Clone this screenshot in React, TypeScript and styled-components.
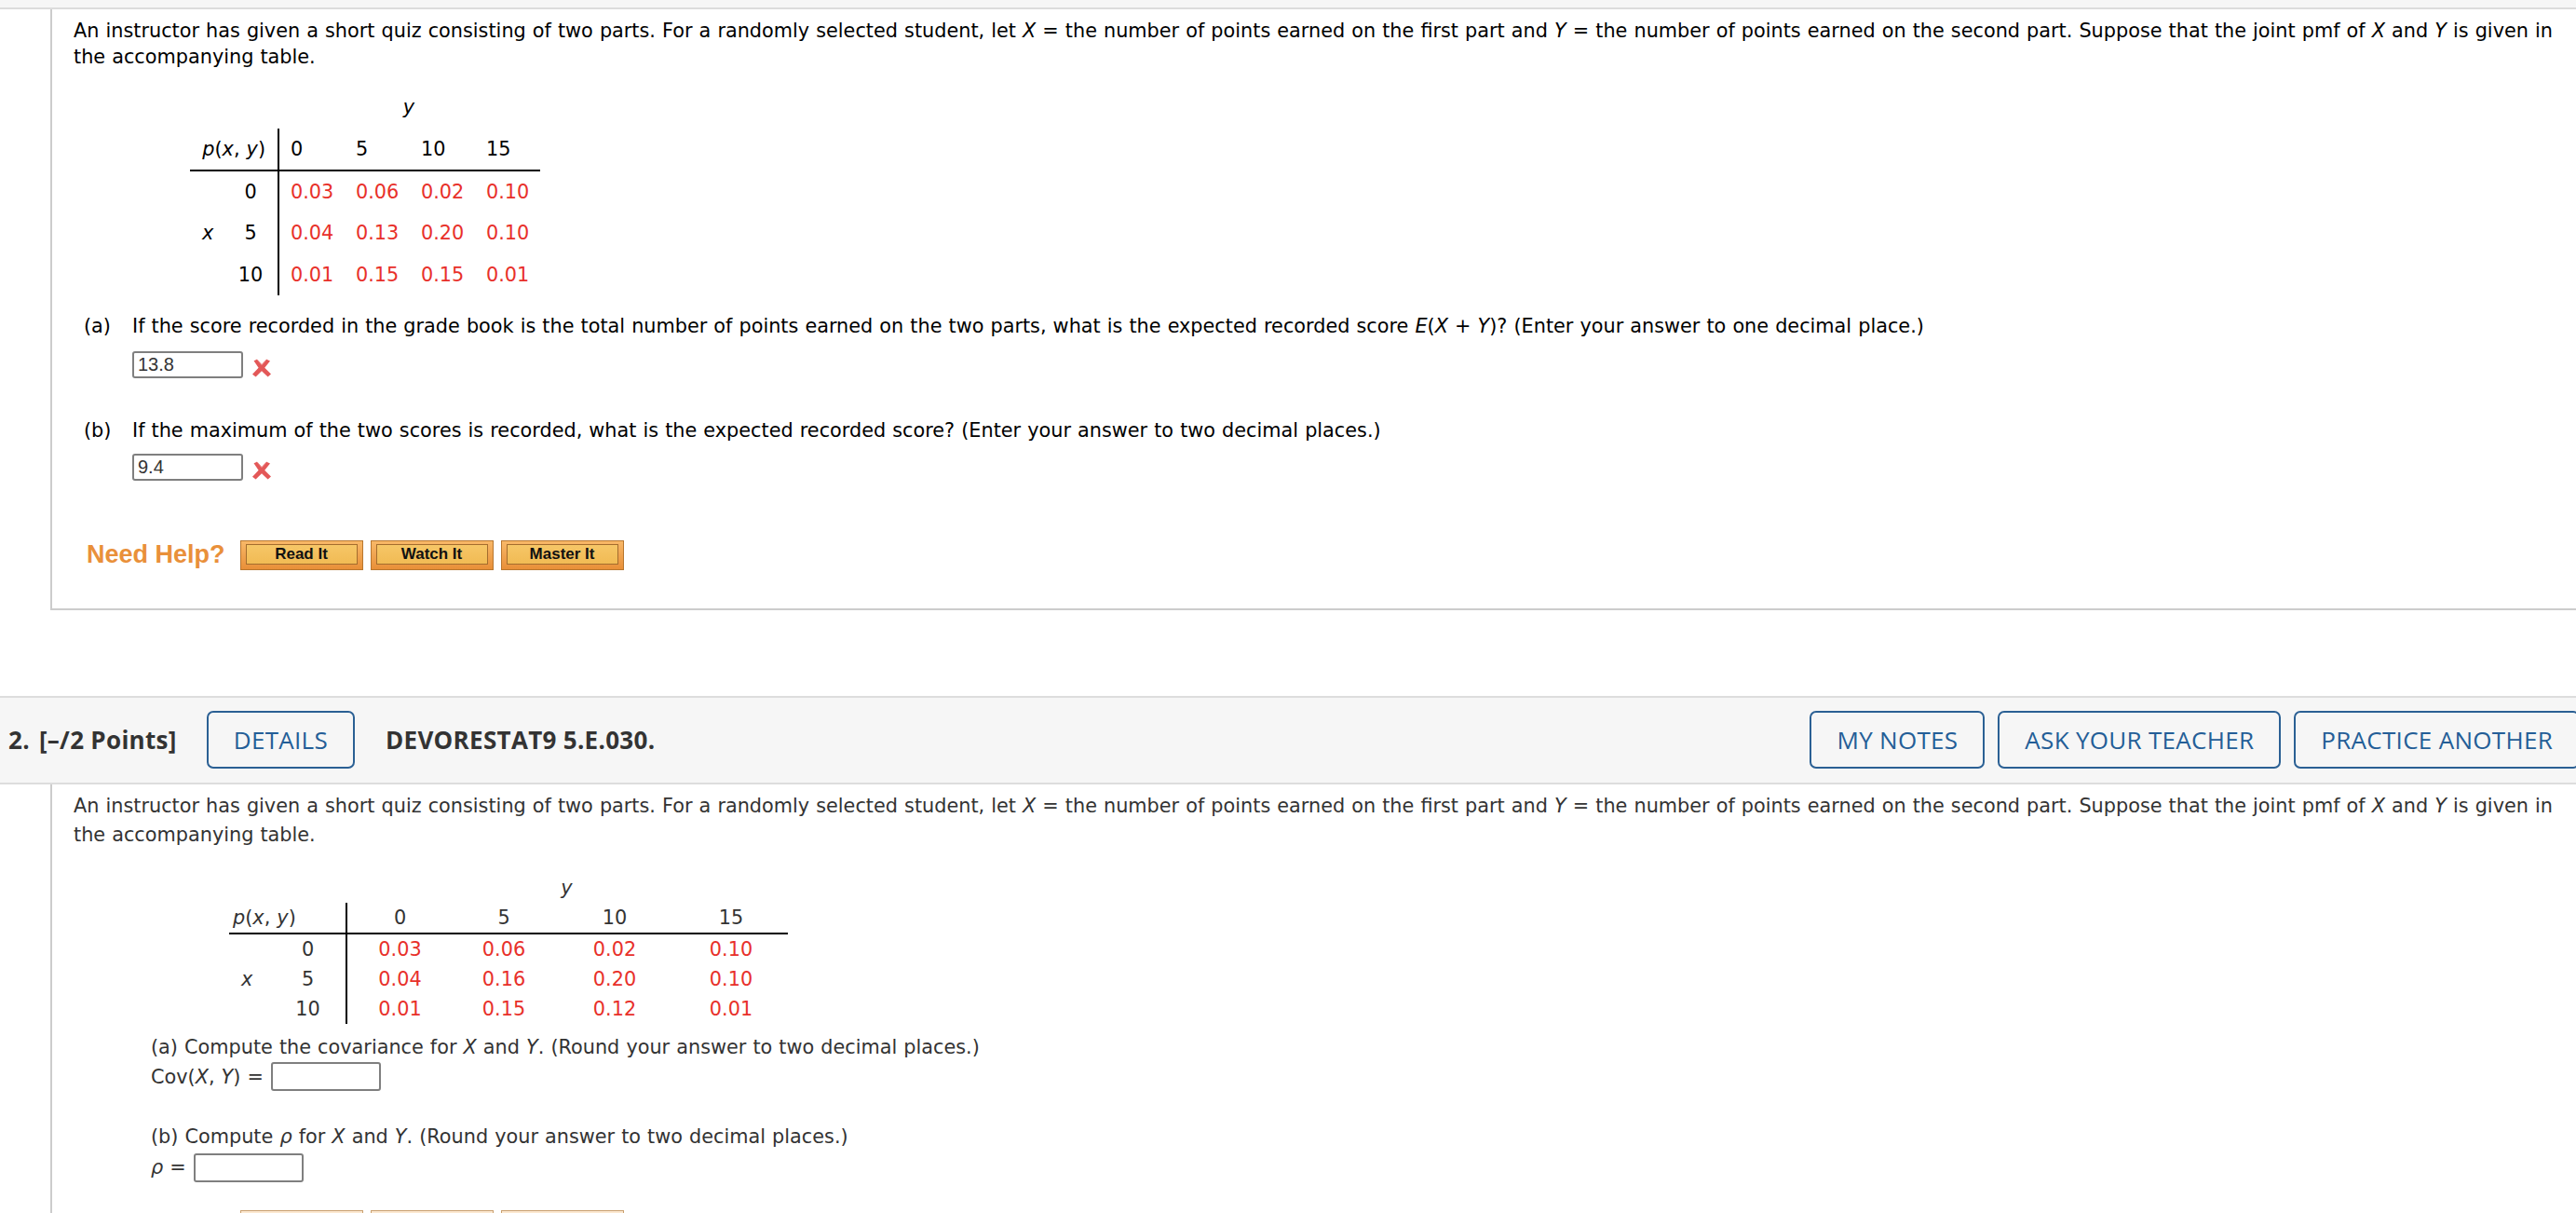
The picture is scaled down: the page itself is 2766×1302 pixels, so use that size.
import React from 'react';
import styled, { createGlobalStyle } from 'styled-components';

const GlobalStyle = createGlobalStyle`
    html, body {
        margin: 0;
        padding: 0;
        background: #ffffff;
        overflow-x: hidden;
    }
    body {
        font-family: "DejaVu Sans", Verdana, sans-serif;
        font-size: 20.8px;
        color: #000000;
    }
`;

const Page = styled.div`
    width: 2766px;
    overflow: hidden;
`;

const HeaderStub = styled.div`
    height: 8px;
    background: #f6f6f6;
    border-bottom: 2px solid #dcdcdc;
`;

const Panel = styled.div<{ $muted?: boolean; $closed?: boolean }>`
    margin-left: 54px;
    border-left: 2px solid #cccccc;
    border-bottom: ${(p) => (p.$closed ? '2px solid #cccccc' : 'none')};
    padding: ${(p) => (p.$muted ? '8px 6px 40px 23px' : '10px 6px 41px 23px')};
    color: ${(p) => (p.$muted ? '#333333' : '#000000')};
    word-spacing: 0.45px;
`;

const Paragraph = styled.p<{ $lh: number }>`
    margin: 0;
    line-height: ${(p) => p.$lh}px;
`;

const Em = styled.i`
    font-style: italic;
`;

const Grid = styled.div<{ $cols: string; $left: number; $top: number }>`
    display: grid;
    grid-template-columns: ${(p) => p.$cols};
    margin-left: ${(p) => p.$left}px;
    margin-top: ${(p) => p.$top}px;
    width: max-content;
`;

const Cell = styled.div<{
    $h: number;
    $align?: 'left' | 'center' | 'right';
    $span?: number;
    $red?: boolean;
    $rule?: boolean;
    $bar?: boolean;
    $pad?: string;
}>`
    box-sizing: border-box;
    height: ${(p) => p.$h + (p.$rule ? 2 : 0)}px;
    line-height: ${(p) => p.$h}px;
    grid-column: ${(p) => (p.$span ? `span ${p.$span}` : 'auto')};
    text-align: ${(p) => p.$align || 'left'};
    color: ${(p) => (p.$red ? '#e8302a' : 'inherit')};
    border-bottom: ${(p) => (p.$rule ? '2px solid #000' : 'none')};
    border-left: ${(p) => (p.$bar ? '2px solid #000' : 'none')};
    padding: ${(p) => p.$pad || '0'};
    white-space: nowrap;
`;

const PartRow = styled.div<{ $top: number; $lh: number; $indent: number }>`
    display: flex;
    margin-top: ${(p) => p.$top}px;
    margin-left: ${(p) => p.$indent}px;
    line-height: ${(p) => p.$lh}px;
    white-space: nowrap;
`;

const PartLabel = styled.span`
    width: 52px;
    flex: none;
`;

const AnswerRow = styled.div<{ $top: number; $indent: number }>`
    display: flex;
    align-items: center;
    gap: 8px;
    margin-top: ${(p) => p.$top}px;
    margin-left: ${(p) => p.$indent}px;
    white-space: nowrap;
`;

const AnswerBox = styled.input<{ $w: number; $h: number }>`
    box-sizing: border-box;
    width: ${(p) => p.$w}px;
    height: ${(p) => p.$h}px;
    margin: 0;
    padding: 0 4px;
    border: 2px solid #7f7f7f;
    border-radius: 3px;
    background: #ffffff;
    font-family: "Liberation Sans", Arial, sans-serif;
    font-size: 20px;
    color: #333333;
    outline: none;
`;

const WrongMark = styled.svg`
    flex: none;
    margin-left: 1px;
    margin-top: 7px;
`;

const HelpRow = styled.div<{ $top: number }>`
    display: flex;
    align-items: center;
    margin-top: ${(p) => p.$top}px;
    margin-left: 14px;
`;

const HelpTitle = styled.span`
    font-family: "Liberation Sans", Arial, sans-serif;
    font-weight: 700;
    font-size: 27px;
    color: #e9903a;
    margin-right: 16px;
    word-spacing: 0;
`;

const HelpButton = styled.div<{ $pale?: boolean }>`
    box-sizing: border-box;
    width: 132px;
    height: 32px;
    margin-right: 8px;
    padding: 3px 5px 5px;
    border: 1px solid ${(p) => (p.$pale ? '#c9a070' : '#b8772f')};
    background: ${(p) =>
        p.$pale ? 'linear-gradient(#fbe9d2, #f6dcb8)' : 'linear-gradient(#f8b868, #e88f38)'};
`;

const HelpFace = styled.span<{ $pale?: boolean }>`
    box-sizing: border-box;
    display: flex;
    align-items: center;
    justify-content: center;
    height: 100%;
    border: 1px solid ${(p) => (p.$pale ? '#d8b48a' : '#a46d2e')};
    background: ${(p) => (p.$pale ? '#fbebd3' : 'linear-gradient(#f6c667, #f1bb54)')};
    font-family: "Liberation Sans", Arial, sans-serif;
    font-weight: 700;
    font-size: 17px;
    color: #111111;
    word-spacing: 0;
`;

const QuestionBar = styled.div`
    display: flex;
    align-items: center;
    margin-top: 92px;
    margin-right: -4px;
    padding: 14px 0 15px 9px;
    background: #f6f6f6;
    border-top: 2px solid #dddddd;
    border-bottom: 2px solid #dddddd;
    font-family: "Open Sans", "DejaVu Sans", sans-serif;
    font-size: 26px;
    color: #333333;
`;

const QuestionNumber = styled.span`
    font-weight: 700;
    margin-right: 32px;
    letter-spacing: 0.3px;
    white-space: nowrap;
`;

const NumberDot = styled.span`
    margin-right: 10px;
`;

const Source = styled.span`
    font-weight: 700;
    margin-left: 33px;
    letter-spacing: 0.3px;
    white-space: nowrap;
`;

const BarSpacer = styled.div`
    flex: 1;
`;

const BarButton = styled.button`
    box-sizing: border-box;
    height: 62px;
    margin-left: 14px;
    padding: 0 27px;
    border: 2px solid #2b6094;
    border-radius: 7px;
    background: transparent;
    font-family: "Open Sans", "DejaVu Sans", sans-serif;
    font-size: 26px;
    font-weight: 500;
    letter-spacing: 0.3px;
    color: #245e97;
    white-space: nowrap;
    &:first-of-type {
        margin-left: 0;
    }
`;

const Cross = () => (
    <WrongMark width="22" height="20" viewBox="0 0 22 20">
        <path
            d="M2.5 2.2 L6 0.8 L11 6.6 L16.3 0.8 L20 2.6 L14.2 9.8 L21 16.6 L17.6 19.4 L11 13.2 L4.6 19.4 L1 16.8 L7.6 9.8 Z"
            fill="#e35858"
        />
        <path d="M6 0.8 L11 6.6 L16.3 0.8" stroke="#f08c8c" strokeWidth="1" fill="none" />
    </WrongMark>
);

const HelpButtons = ({ pale }: { pale?: boolean }) => (
    <>
        {['Read It', 'Watch It', 'Master It'].map((label) => (
            <HelpButton key={label} $pale={pale}>
                <HelpFace $pale={pale}>{label}</HelpFace>
            </HelpButton>
        ))}
    </>
);

const Intro = ({ lh }: { lh: number }) => (
    <Paragraph $lh={lh}>
        An instructor has given a short quiz consisting of two parts. For a randomly selected student, let <Em>X</Em> = the
        number of points earned on the first part and <Em>Y</Em> = the number of points earned on the second part. Suppose
        that the joint pmf of <Em>X</Em> and <Em>Y</Em> is given in the accompanying table.
    </Paragraph>
);

const PXY = () => (
    <>
        <Em>p</Em>(<Em>x</Em>, <Em>y</Em>)
    </>
);

const ys = ['0', '5', '10', '15'];

const firstTable = [
    ['0', ['0.03', '0.06', '0.02', '0.10']],
    ['5', ['0.04', '0.13', '0.20', '0.10']],
    ['10', ['0.01', '0.15', '0.15', '0.01']],
] as const;

const secondTable = [
    ['0', ['0.03', '0.06', '0.02', '0.10']],
    ['5', ['0.04', '0.16', '0.20', '0.10']],
    ['10', ['0.01', '0.15', '0.12', '0.01']],
] as const;

function FirstTable() {
    const h = 44.5;
    return (
        <Grid $cols="36px 58px 72px 70px 70px 70px" $left={125} $top={18}>
            <Cell $h={h} $span={2} />
            <Cell $h={h} $span={4} $align="center">
                <Em>y</Em>
            </Cell>
            <Cell $h={44} $span={2} $align="right" $rule $pad="0 13px 0 0">
                <PXY />
            </Cell>
            {ys.map((y, i) => (
                <Cell key={y} $h={44} $rule $bar={i === 0} $pad="0 0 0 12px">
                    {y}
                </Cell>
            ))}
            {firstTable.map(([x, values]) => (
                <React.Fragment key={x}>
                    <Cell $h={h} $pad="0 0 0 13px">
                        {x === '5' ? <Em>x</Em> : null}
                    </Cell>
                    <Cell $h={h} $align="center">
                        {x}
                    </Cell>
                    {values.map((v, i) => (
                        <Cell key={i} $h={h} $red $bar={i === 0} $pad="0 0 0 12px">
                            {v}
                        </Cell>
                    ))}
                </React.Fragment>
            ))}
        </Grid>
    );
}

function SecondTable() {
    const h = 32;
    return (
        <Grid $cols="44px 81px 115px 110px 128px 122px" $left={167} $top={24.6}>
            <Cell $h={h} $span={2} />
            <Cell $h={h} $span={4} $align="center">
                <Em>y</Em>
            </Cell>
            <Cell $h={h} $span={2} $rule $pad="0 0 0 4px">
                <PXY />
            </Cell>
            {ys.map((y, i) => (
                <Cell key={y} $h={h} $rule $bar={i === 0} $align="center">
                    {y}
                </Cell>
            ))}
            {secondTable.map(([x, values]) => (
                <React.Fragment key={x}>
                    <Cell $h={h} $pad="0 0 0 13px">
                        {x === '5' ? <Em>x</Em> : null}
                    </Cell>
                    <Cell $h={h} $align="center">
                        {x}
                    </Cell>
                    {values.map((v, i) => (
                        <Cell key={i} $h={h} $red $bar={i === 0} $align="center">
                            {v}
                        </Cell>
                    ))}
                </React.Fragment>
            ))}
        </Grid>
    );
}

export default function App() {
    return (
        <Page>
            <GlobalStyle />
            <HeaderStub />
            <Panel $closed>
                <Intro lh={27.7} />
                <FirstTable />
                <PartRow $top={19.5} $lh={27.7} $indent={11}>
                    <PartLabel>(a)</PartLabel>
                    <span>
                        If the score recorded in the grade book is the total number of points earned on the two parts,
                        what is the expected recorded score <Em>E</Em>(<Em>X</Em> + <Em>Y</Em>)? (Enter your answer to
                        one decimal place.)
                    </span>
                </PartRow>
                <AnswerRow $top={12} $indent={63}>
                    <AnswerBox $w={119} $h={29} readOnly value="13.8" />
                    <Cross />
                </AnswerRow>
                <PartRow $top={43} $lh={27.7} $indent={11}>
                    <PartLabel>(b)</PartLabel>
                    <span>
                        If the maximum of the two scores is recorded, what is the expected recorded score? (Enter your
                        answer to two decimal places.)
                    </span>
                </PartRow>
                <AnswerRow $top={10.5} $indent={63}>
                    <AnswerBox $w={119} $h={29} readOnly value="9.4" />
                    <Cross />
                </AnswerRow>
                <HelpRow $top={64}>
                    <HelpTitle>Need Help?</HelpTitle>
                    <HelpButtons />
                </HelpRow>
            </Panel>

            <QuestionBar>
                <QuestionNumber>
                    <NumberDot>2.</NumberDot>[–/2 Points]
                </QuestionNumber>
                <BarButton>DETAILS</BarButton>
                <Source>DEVORESTAT9 5.E.030.</Source>
                <BarSpacer />
                <BarButton>MY NOTES</BarButton>
                <BarButton>ASK YOUR TEACHER</BarButton>
                <BarButton>PRACTICE ANOTHER</BarButton>
            </QuestionBar>

            <Panel $muted>
                <Intro lh={31.2} />
                <SecondTable />
                <PartRow $top={10} $lh={31.2} $indent={83}>
                    (a) Compute the covariance for <Em>&nbsp;X</Em>&nbsp;and <Em>&nbsp;Y</Em>. (Round your answer to two
                    decimal places.)
                </PartRow>
                <AnswerRow $top={0} $indent={83}>
                    <span>
                        Cov(<Em>X</Em>, <Em>Y</Em>) =
                    </span>
                    <AnswerBox $w={118} $h={31} readOnly value="" />
                </AnswerRow>
                <PartRow $top={34} $lh={31.2} $indent={83}>
                    (b) Compute&nbsp;<Em>ρ</Em>&nbsp;for <Em>&nbsp;X</Em>&nbsp;and <Em>&nbsp;Y</Em>. (Round your answer to
                    two decimal places.)
                </PartRow>
                <AnswerRow $top={1.5} $indent={83}>
                    <span>
                        <Em>ρ</Em> =
                    </span>
                    <AnswerBox $w={118} $h={31} readOnly value="" />
                </AnswerRow>
                <HelpRow $top={30.6}>
                    <HelpTitle>Need Help?</HelpTitle>
                    <HelpButtons pale />
                </HelpRow>
            </Panel>
        </Page>
    );
}
